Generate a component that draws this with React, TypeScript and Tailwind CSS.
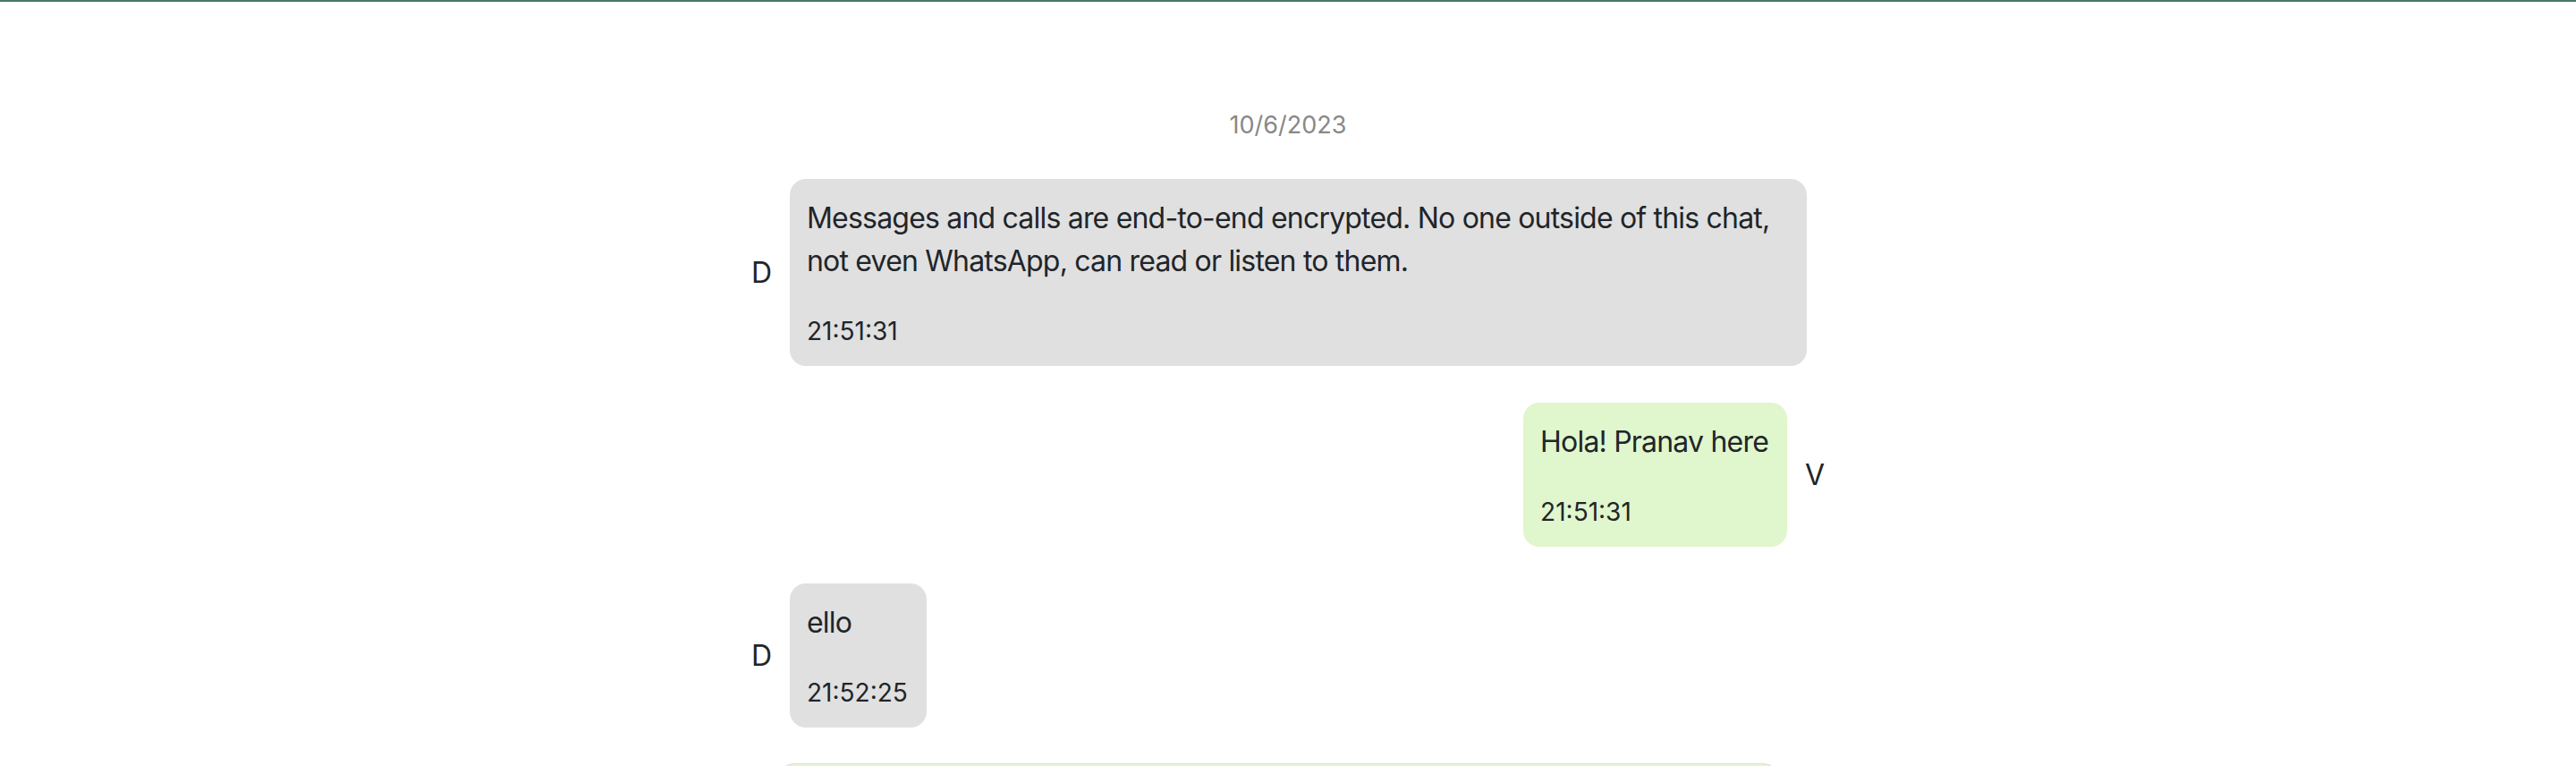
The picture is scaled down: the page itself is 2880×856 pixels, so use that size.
// Chat transcript view: date divider, incoming / outgoing bubbles, composer edge
type Msg = { id: number; from: "them" | "me"; initial: string; text: string; time: string };

const messages: Msg[] = [
  {
    id: 1,
    from: "them",
    initial: "D",
    text: "Messages and calls are end-to-end encrypted. No one outside of this chat, not even WhatsApp, can read or listen to them.",
    time: "21:51:31",
  },
  { id: 2, from: "me", initial: "V", text: "Hola! Pranav here", time: "21:51:31" },
  { id: 3, from: "them", initial: "D", text: "ello", time: "21:52:25" },
];

function Bubble({ msg }: { msg: Msg }) {
  const mine = msg.from === "me";
  return (
    <div
      className={`max-w-[1137px] rounded-[18px] pl-[19px] pr-[21px] pt-[20px] pb-[18px] ${
        mine ? "bg-[#e0f6cc]" : "bg-[#e0e0e0]"
      }`}
    >
      <p className="text-[32px] leading-[48px] tracking-[-0.8px]">{msg.text}</p>
      <p className="mt-[33px] text-[28px] leading-[42px]">{msg.time}</p>
    </div>
  );
}

function Row({ msg }: { msg: Msg }) {
  const mine = msg.from === "me";
  const avatar = <span className="w-[22px] text-[32px] leading-[48px] shrink-0">{msg.initial}</span>;
  return (
    <div className={`flex items-center ${mine ? "justify-end gap-[20px]" : "justify-start gap-[21px]"}`}>
      {!mine && avatar}
      <Bubble msg={msg} />
      {mine && avatar}
    </div>
  );
}

export default function App() {
  return (
    <div className="min-h-screen bg-white border-t-2 border-[#46786a] text-[#212529] font-['Inter','Liberation_Sans',sans-serif] overflow-hidden">
      <div className="w-[1200px] mx-auto pt-[118px] flex flex-col">
        <div className="text-center text-[27px] leading-[40px] text-[#888888]">10/6/2023</div>

        <div className="mt-[40px] flex flex-col gap-[41px]">
          {messages.map((m) => (
            <Row key={m.id} msg={m} />
          ))}
        </div>

        {/* composer, only its top edge is in view */}
        <div className="mt-[40px] ml-[31px] w-[1117px] h-[80px] rounded-[16px] border border-[#dcdcdc] bg-[#e3f6d1]" />
      </div>
    </div>
  );
}
